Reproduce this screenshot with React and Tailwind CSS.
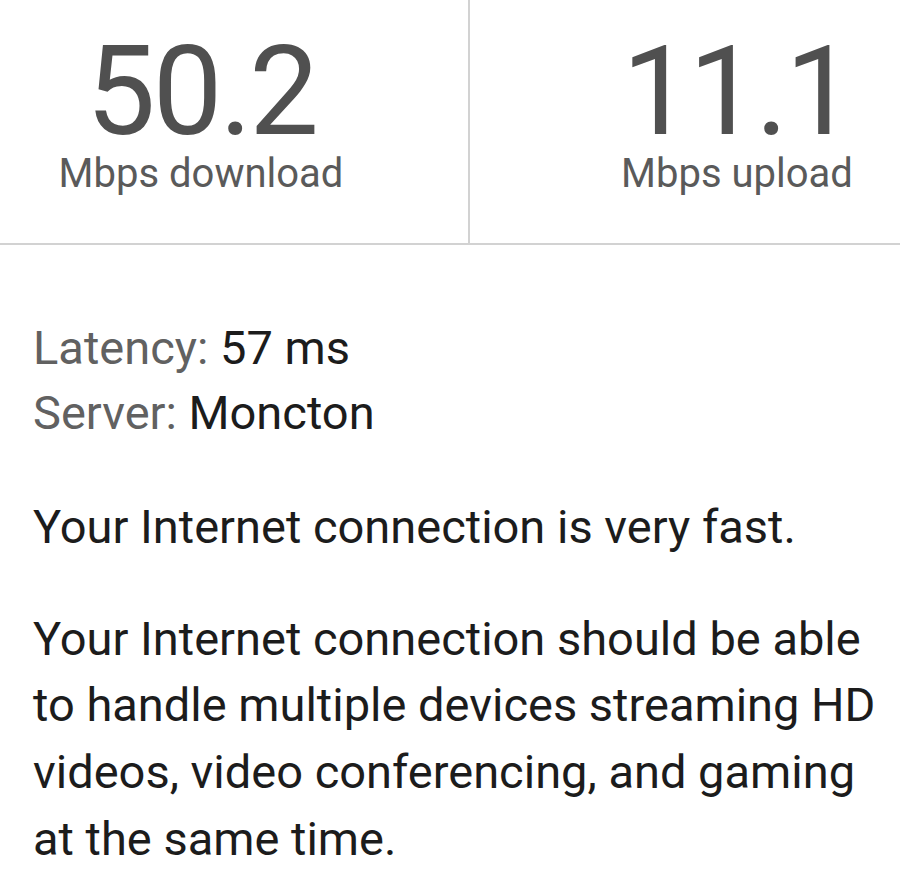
export default function App() {
  return (
    <div className="w-[900px] h-[894px] bg-white overflow-hidden font-['Roboto',sans-serif]">
      <div className="flex h-[245px] border-b-2 border-[#d2d2d2]">
        <div className="w-[470px] border-r-2 border-[#d2d2d2] pr-[66px] flex flex-col items-center">
          <div className="pt-[34px] text-[124px] leading-[116px] tracking-[-3px] text-[#505050]">50.2</div>
          <div className="mt-[4px] text-[40px] leading-[40px] text-[#5a5a5a]">Mbps download</div>
        </div>
        <div className="flex-1 pl-[104px] flex flex-col items-center">
          <div className="pt-[34px] text-[124px] leading-[116px] tracking-[-3px] text-[#505050]">11.1</div>
          <div className="mt-[4px] text-[40px] leading-[40px] text-[#5a5a5a]">Mbps upload</div>
        </div>
      </div>

      <div className="pl-[33px] pt-[70px] text-[47px] text-[#1c1c1c]">
        <div className="leading-[65px]">
          <p><span className="text-[#616161]">Latency:</span> 57 ms</p>
          <p><span className="text-[#616161]">Server:</span> Moncton</p>
        </div>
        <p className="mt-[49px] leading-[66.7px]">Your Internet connection is very fast.</p>
        <p className="mt-[45px] leading-[66.7px]">
          Your Internet connection should be able to handle multiple devices streaming HD videos, video conferencing, and gaming at the same time.
        </p>
      </div>
    </div>
  )
}
